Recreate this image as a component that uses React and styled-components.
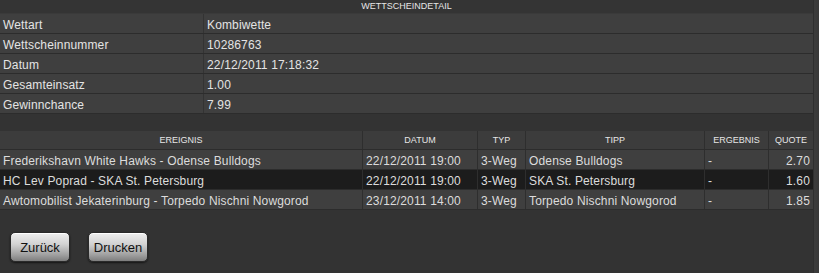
import styled, { createGlobalStyle } from 'styled-components';

const GlobalStyle = createGlobalStyle`
  html, body {
    margin: 0;
    padding: 0;
    background: #333333;
  }
  body {
    font-family: 'Liberation Sans', Arial, sans-serif;
  }
  * {
    box-sizing: border-box;
  }
`;

const Page = styled.div`
  display: flex;
  width: 819px;
  height: 273px;
  background: #333333;
  overflow: hidden;
`;

const Main = styled.div`
  width: 813px;
  display: flex;
  flex-direction: column;
`;

const ScrollTrack = styled.div`
  width: 6px;
  background: linear-gradient(to right, #3c3c3c, #393939);
  border-left: 1px solid #2f2f2f;
`;

const Title = styled.div`
  height: 14px;
  line-height: 13px;
  font-size: 9px;
  color: #e6e6e6;
  text-align: center;
  background: #343434;
  border-bottom: 1px solid #3a3a3a;
`;

const InfoRow = styled.div`
  display: grid;
  grid-template-columns: 203px 1fr;
  height: 20px;
  background: #3f3f3f;
  border-bottom: 1px solid #2c2c2c;
`;

const InfoCell = styled.div`
  padding: 3px 0 0 3px;
  line-height: 16px;
  font-size: 12px;
  letter-spacing: 0.15px;
  color: #e4e4e4;
  white-space: nowrap;
  & + & {
    border-left: 1px solid #333333;
  }
`;

const Events = styled.div`
  margin-top: 17px;
  display: flex;
  flex-direction: column;
`;

const COLUMNS = '362px 115px 48px 179px 64px 1fr';

const HeadRow = styled.div`
  display: grid;
  grid-template-columns: ${COLUMNS};
  height: 19px;
  background: #3c3c3c;
  border-bottom: 1px solid #2c2c2c;
`;

const HeadCell = styled.div`
  line-height: 18px;
  font-size: 9px;
  color: #e6e6e6;
  text-align: center;
  & + & {
    border-left: 1px solid #2e2e2e;
  }
`;

const EventRow = styled.div`
  display: grid;
  grid-template-columns: ${COLUMNS};
  height: 20px;
  background: ${(p) => (p.$active ? '#1c1c1c' : '#3f3f3f')};
  border-bottom: 1px solid #2c2c2c;
`;

const EventCell = styled.div`
  padding: 3px ${(p) => (p.$right ? '3px' : '0')} 0 3px;
  line-height: 16px;
  font-size: 12px;
  letter-spacing: 0.15px;
  color: #dcdcdc;
  white-space: nowrap;
  overflow: hidden;
  text-align: ${(p) => (p.$right ? 'right' : 'left')};
  & + & {
    border-left: 1px solid #2e2e2e;
  }
`;

const Actions = styled.div`
  display: flex;
  gap: 18px;
  padding: 22px 0 0 10px;
`;

const Button = styled.button`
  width: 60px;
  height: 30px;
  padding: 0;
  border: 1px solid #2a2a2a;
  border-radius: 5px;
  background: linear-gradient(to bottom, #efefef 0%, #d2d2d2 40%, #a0a0a0 78%, #7e7e7e 100%);
  box-shadow: 0 1px 2px rgba(0, 0, 0, 0.6), inset 0 1px 0 #ffffff;
  font-family: 'Liberation Sans', Arial, sans-serif;
  font-size: 13px;
  color: #111111;
  cursor: pointer;
`;

const info = [
  ['Wettart', 'Kombiwette'],
  ['Wettscheinnummer', '10286763'],
  ['Datum', '22/12/2011 17:18:32'],
  ['Gesamteinsatz', '1.00'],
  ['Gewinnchance', '7.99'],
];

const headers = ['EREIGNIS', 'DATUM', 'TYP', 'TIPP', 'ERGEBNIS', 'QUOTE'];

const events = [
  {
    event: 'Frederikshavn White Hawks - Odense Bulldogs',
    date: '22/12/2011 19:00',
    type: '3-Weg',
    tip: 'Odense Bulldogs',
    result: '-',
    odds: '2.70',
  },
  {
    event: 'HC Lev Poprad - SKA St. Petersburg',
    date: '22/12/2011 19:00',
    type: '3-Weg',
    tip: 'SKA St. Petersburg',
    result: '-',
    odds: '1.60',
    active: true,
  },
  {
    event: 'Awtomobilist Jekaterinburg - Torpedo Nischni Nowgorod',
    date: '23/12/2011 14:00',
    type: '3-Weg',
    tip: 'Torpedo Nischni Nowgorod',
    result: '-',
    odds: '1.85',
  },
];

const App = () => {
  return (
    <>
      <GlobalStyle />
      <Page>
        <Main>
          <Title>WETTSCHEINDETAIL</Title>
          {info.map(([label, value]) => (
            <InfoRow key={label}>
              <InfoCell>{label}</InfoCell>
              <InfoCell>{value}</InfoCell>
            </InfoRow>
          ))}

          <Events>
            <HeadRow>
              {headers.map((h) => (
                <HeadCell key={h}>{h}</HeadCell>
              ))}
            </HeadRow>
            {events.map((e) => (
              <EventRow key={e.event} $active={e.active}>
                <EventCell>{e.event}</EventCell>
                <EventCell>{e.date}</EventCell>
                <EventCell>{e.type}</EventCell>
                <EventCell>{e.tip}</EventCell>
                <EventCell>{e.result}</EventCell>
                <EventCell $right>{e.odds}</EventCell>
              </EventRow>
            ))}
          </Events>

          <Actions>
            <Button>Zurück</Button>
            <Button>Drucken</Button>
          </Actions>
        </Main>
        <ScrollTrack />
      </Page>
    </>
  );
};

export default App;
